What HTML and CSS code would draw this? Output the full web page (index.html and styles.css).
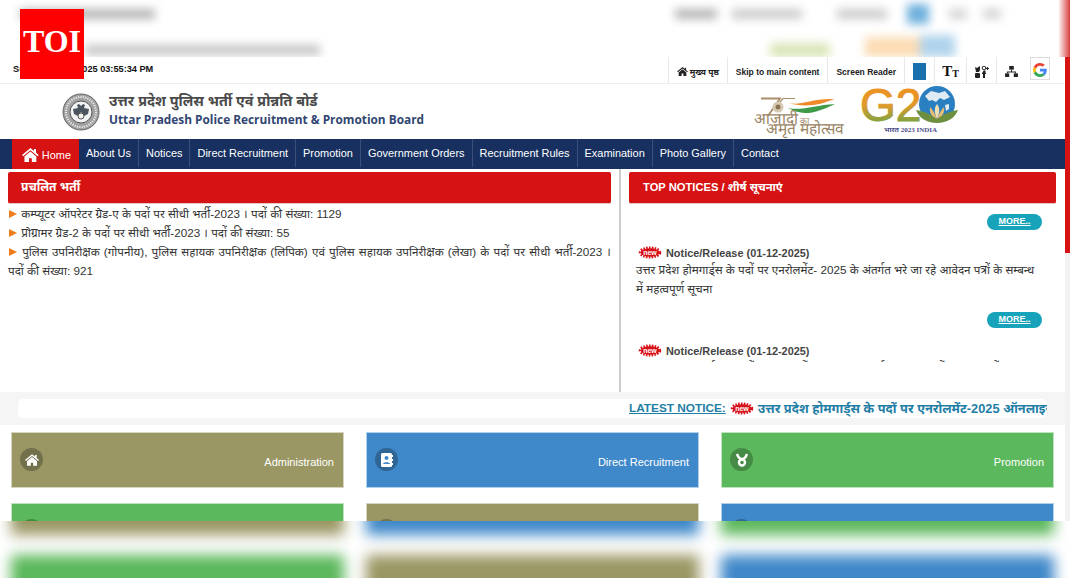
FILE: index.html
```html
<!DOCTYPE html>
<html lang="hi">
<head>
  <meta charset="UTF-8" />
  <title>Uttar Pradesh Police Recruitment &amp; Promotion Board</title>
  <link rel="stylesheet" href="styles.css">
</head>
<body>
  <svg class="defs" width="0" height="0">
    <symbol id="home" viewBox="0 0 24 20">
      <path d="M12 0 0 10l1.600 1.900L12 3.300l10.400 8.600L24 10l-4-3.300V1.500h-3v2.700zM12 5 3.500 12v8H10v-5.500h4V20h6.500v-8z"/>
    </symbol>
    <symbol id="new" viewBox="0 0 24 13">
      <ellipse cx="12" cy="6.500" rx="9.500" ry="4.300" fill="#d8121a" stroke="#d8121a" stroke-width="3.500" stroke-dasharray="1.500 1.200"/>
      <text x="12" y="9" text-anchor="middle" class="new-text">new</text>
    </symbol>
  </svg>

  <div class="logo-toi">TOI</div>

  <div class="blur-top">
    <div class="blur-row">
      <span class="smear s1"></span>
      <span class="smear s2"></span>
      <span class="smear s3"></span>
      <span class="smear s4"></span>
      <span class="smear s5 blue"></span>
      <span class="smear s6"></span>
      <span class="smear s7"></span>
    </div>
    <div class="blur-row row-low">
      <span class="smear s8"></span>
      <span class="smear s9 green"></span>
      <span class="smear s10 orange"></span>
      <span class="smear s11 sky"></span>
    </div>
    <div class="blur-red"></div>
  </div>

  <div class="window">
    <div class="page">
      <div class="topbar">
        <div class="clock">Sunday, 07-12-2025 03:55:34 PM</div>
        <ul class="tools">
          <li><svg width="11" height="9" fill="#222"><use href="#home"/></svg> मुख्य पृष्ठ</li>
          <li>Skip to main content</li>
          <li>Screen Reader</li>
          <li class="tool-icon"><span class="swatch"></span></li>
          <li class="tool-icon tool-tt"><span class="big-t">T</span><span class="small-t">T</span></li>
          <li class="tool-icon">
            <svg width="14" height="12" viewBox="0 0 14 12" fill="#222">
              <path d="M0 1l2 1 3-2v4l-1 2H1z"/>
              <circle cx="9" cy="2" r="1.800" fill="none" stroke="#222"/>
              <path d="M12 1h1v1h1v1h-1v1h-1V3h-1V2h1z"/>
              <rect x="0" y="7" width="5" height="5" rx="1"/>
              <path d="M8 12V8H7V6.500h1V5.500C8 4.800 9 4.500 10.500 4.500V6H10v.5h1V8h-1v4z"/>
            </svg>
          </li>
          <li class="tool-icon">
            <svg width="13" height="11" viewBox="0 0 14 12" fill="#222">
              <rect x="4.500" y="0" width="5" height="4"/>
              <rect x="0" y="8" width="4.500" height="4"/>
              <rect x="9.500" y="8" width="4.500" height="4"/>
              <path d="M6.500 4h1v2H12v2h-1V7H3v1H2V6h4.500z"/>
            </svg>
          </li>
          <li class="tool-google">
            <svg width="14" height="14" viewBox="0 0 48 48">
              <path fill="#ea4335" d="M24 9.500c3.500 0 6.700 1.200 9.200 3.600l6.900-6.900C35.900 2.400 30.500 0 24 0 14.600 0 6.500 5.400 2.600 13.200l8 6.200C12.500 13.700 17.800 9.500 24 9.500z"/>
              <path fill="#4285f4" d="M47 24.500c0-1.600-.1-3.100-.4-4.500H24v9h12.900c-.6 3-2.200 5.500-4.800 7.200l7.700 6C44.300 38 47 31.800 47 24.500z"/>
              <path fill="#fbbc05" d="M10.500 28.600c-.5-1.500-.8-3-.8-4.600s.3-3.100.8-4.600l-8-6.200C.9 16.500 0 20.100 0 24s.9 7.500 2.600 10.800z"/>
              <path fill="#34a853" d="M24 48c6.500 0 11.900-2.100 15.900-5.800l-7.700-6c-2.200 1.400-4.900 2.300-8.200 2.300-6.200 0-11.500-4.200-13.400-9.900l-8 6.200C6.500 42.600 14.600 48 24 48z"/>
            </svg>
          </li>
        </ul>
      </div>

      <header class="masthead">
        <div class="brand">
          <svg width="38" height="38" viewBox="0 0 38 38">
            <circle cx="19" cy="19" r="18" fill="#a2a2a2" stroke="#666"/>
            <circle cx="19" cy="19" r="15" fill="none" stroke="#ececec" stroke-width="2" stroke-dasharray="1.200 1.200"/>
            <circle cx="19" cy="19" r="11" fill="#f2f2f2" stroke="#555"/>
            <path d="M19 8v5l-2-2-2 1 1 3-5 1 1 5 4 2 3-4 3 4 4-2 1-5-5-1 1-3-2-1-2 2z" fill="#4b5560"/>
            <circle cx="19" cy="23" r="3" fill="#f2f2f2" stroke="#555"/>
          </svg>
          <div>
            <div class="brand-hi">उत्तर प्रदेश पुलिस भर्ती एवं प्रोन्नति बोर्ड</div>
            <div class="brand-en">Uttar Pradesh Police Recruitment &amp; Promotion Board</div>
          </div>
        </div>
        <div class="badges">
          <div class="azadi">
            <svg width="92" height="19" viewBox="0 0 92 19">
              <path d="M7 1.500H26L14 19" fill="none" stroke="#a98e68" stroke-width="1.800"/>
              <path d="M29 1.500H41M29 1.500l-5 6" fill="none" stroke="#a98e68" stroke-width="1.200"/>
              <circle cx="24" cy="10" r="5.500" fill="#d6c8b2"/>
              <circle cx="24" cy="10" r="2.500" fill="#8a7454"/>
              <path d="M34 6c14 3 22-5 47-4-8 2-12 5-22 6-10 1-17 0-25-2z" fill="#ee8a2a"/>
              <path d="M34 11c14 3 27-3 47-4-7 3-14 7-26 9-10 0-15-2-21-5z" fill="#3f9a4a"/>
            </svg>
            <div class="azadi-hi">आज़ादी<small>का</small></div>
            <div class="azadi-hi2">अमृत महोत्सव</div>
          </div>
          <svg class="g20" width="102" height="52" viewBox="0 0 102 52">
            <defs>
              <linearGradient id="g20fill" x1="0" y1="0" x2="0" y2="1">
                <stop offset="0" stop-color="#f28c1e"/>
                <stop offset=".5" stop-color="#e09a2c"/>
                <stop offset="1" stop-color="#4ea64a"/>
              </linearGradient>
            </defs>
            <text x="1" y="36" class="g20-text" fill="url(#g20fill)" stroke="url(#g20fill)" stroke-width="1">G2</text>
            <circle cx="78" cy="19" r="18" fill="#2a7fc0"/>
            <path d="M66 11l6-5 8 2 6-2 5 6-6 3-4-2-4 4-4-2-3 1zM86 20l4-1 0 5-3 2z" fill="#dfeaf2"/>
            <path d="M78 19c3 4 3 8 0 15-3-7-3-11 0-15z" fill="#f0dfb4"/>
            <path d="M71 22c3 3 5 7 7 12-5-2-8-6-7-12zM85 22c-3 3-5 7-7 12 5-2 8-6 7-12z" fill="#e8bd72"/>
            <path d="M57 25c7 1 15 4 21 9 6-5 14-8 21-9-3 8-11 13-21 13s-18-5-21-13z" fill="#6d8f3f"/>
            <text x="25" y="47" class="g20-sub">भारत 2023 INDIA</text>
          </svg>
        </div>
      </header>

      <nav class="mainnav">
        <a class="nav-home"><svg width="17" height="14" fill="#fff"><use href="#home"/></svg> Home</a>
        <a>About Us</a>
        <a>Notices</a>
        <a>Direct Recruitment</a>
        <a>Promotion</a>
        <a>Government Orders</a>
        <a>Recruitment Rules</a>
        <a>Examination</a>
        <a>Photo Gallery</a>
        <a>Contact</a>
      </nav>

      <div class="panels">
        <section class="panel-left">
          <h2 class="panel-title">प्रचलित भर्ती</h2>
          <ul class="openings">
            <li><span class="arrow"></span> कम्प्यूटर ऑपरेटर ग्रेड-ए के पदों पर सीधी भर्ती-2023 । पदों की संख्या: 1129</li>
            <li><span class="arrow"></span> प्रोग्रामर ग्रेड-2 के पदों पर सीधी भर्ती-2023 । पदों की संख्या: 55</li>
            <li><span class="arrow"></span> पुलिस उपनिरीक्षक (गोपनीय), पुलिस सहायक उपनिरीक्षक (लिपिक) एवं पुलिस सहायक उपनिरीक्षक (लेखा) के पदों पर सीधी भर्ती-2023 । पदों की संख्या: 921</li>
          </ul>
        </section>
        <section class="panel-right">
          <h2 class="panel-title title-notices">TOP NOTICES / शीर्ष सूचनाएं</h2>
          <div class="notices">
            <div class="more-row"><a class="more">MORE..</a></div>
            <div class="notice">
              <div class="notice-head"><svg width="24" height="13"><use href="#new"/></svg> Notice/Release (01-12-2025)</div>
              <p>उत्तर प्रदेश होमगार्ड्स के पदों पर एनरोलमेंट- 2025 के अंतर्गत भरे जा रहे आवेदन पत्रों के सम्बन्ध में महत्वपूर्ण सूचना</p>
            </div>
            <div class="more-row"><a class="more">MORE..</a></div>
            <div class="notice">
              <div class="notice-head"><svg width="24" height="13"><use href="#new"/></svg> Notice/Release (01-12-2025)</div>
              <p>उत्तर प्रदेश होमगार्ड्स के पदों पर एनरोलमेंट- 2025 के अंतर्गत आवेदन पत्रों के सम्बन्ध में सूचना</p>
            </div>
          </div>
        </section>
      </div>

      <div class="ticker">
        <div class="ticker-inner">
          <a class="ticker-label">LATEST NOTICE:</a>
          <svg width="24" height="13"><use href="#new"/></svg>
          <span class="ticker-text">उत्तर प्रदेश होमगार्ड्स के पदों पर एनरोलमेंट-2025 ऑनलाइन आवेदन</span>
        </div>
      </div>

      <div class="cards">
        <a class="card olive">
          <span class="card-icon"><svg width="14" height="12" fill="#fff"><use href="#home"/></svg></span>
          <span class="card-label">Administration</span>
        </a>
        <a class="card blue">
          <span class="card-icon">
            <svg width="12" height="14" viewBox="0 0 12 14">
              <rect x="0" y="0" width="11" height="14" rx="1.500" fill="#fff"/>
              <circle cx="5.500" cy="5" r="2" fill="#3f88c9"/>
              <path d="M2 11c0-2.500 7-2.500 7 0z" fill="#3f88c9"/>
              <path d="M11 2h1v2h-1zM11 6h1v2h-1zM11 10h1v2h-1z" fill="#fff"/>
            </svg>
          </span>
          <span class="card-label">Direct Recruitment</span>
        </a>
        <a class="card green">
          <span class="card-icon">
            <svg width="14" height="14" viewBox="0 0 14 14" fill="none" stroke="#fff" stroke-width="2.400">
              <circle cx="7" cy="9.500" r="3"/>
              <path d="M2 1c1 3 2 5 5 5s4-2 5-5"/>
            </svg>
          </span>
          <span class="card-label">Promotion</span>
        </a>
        <a class="card green"><span class="card-icon"></span></a>
        <a class="card olive"><span class="card-icon"></span></a>
        <a class="card blue"><span class="card-icon"></span></a>
      </div>
    </div>
    <div class="scrollbar"><div class="thumb"></div></div>
  </div>

  <div class="blur-bottom">
    <div class="blur-cards">
      <span class="olive"></span><span class="blue"></span><span class="green"></span>
      <span class="green"></span><span class="olive"></span><span class="blue"></span>
    </div>
  </div>
</body>
</html>
```

FILE: styles.css
```css
html, body { margin: 0; padding: 0; }
body {
  width: 1070px;
  height: 578px;
  overflow: hidden;
  position: relative;
  background: #fff;
  font-family: "Liberation Sans", "Noto Sans", "DejaVu Sans", sans-serif;
  color: #333;
}
ul { list-style: none; margin: 0; padding: 0; }
.defs { position: absolute; }
.new-text { font: bold 7px "Liberation Sans", sans-serif; fill: #fff; }

.logo-toi {
  position: absolute;
  left: 20px; top: 9px;
  width: 64px; height: 70px;
  background: #ff0000;
  color: #fff;
  font: bold 32px/64px "Liberation Serif", serif;
  text-align: center;
  z-index: 5;
}

/* blurred strips above and below the page */
.blur-top {
  height: 57px;
  overflow: hidden;
  position: relative;
  background: #fff;
}
.blur-row {
  display: flex;
  height: 28px;
  align-items: center;
  filter: blur(5px);
}
.row-low { height: 29px; align-items: flex-end; }
.smear { display: block; height: 10px; background: #b5b5b5; flex: none; }
.smear.blue { background: #6fb0dc; height: 20px; }
.smear.green { background: #d9e6b8; height: 14px; }
.smear.orange { background: #fbdcb4; height: 20px; }
.smear.sky { background: #b0d4ec; height: 22px; }
.s1 { width: 135px; margin-left: 20px; }
.s2 { width: 42px; margin-left: 520px; }
.s3 { width: 70px; margin-left: 15px; opacity: .7; }
.s4 { width: 50px; margin-left: 35px; opacity: .7; }
.s5 { width: 22px; margin-left: 20px; }
.s6 { width: 18px; margin-left: 20px; opacity: .6; }
.s7 { width: 18px; margin-left: 16px; opacity: .6; }
.s8 { width: 235px; margin-left: 85px; background: #c4c4c4; margin-bottom: 2px; }
.s9 { width: 60px; margin-left: 450px; }
.s10 { width: 55px; margin-left: 35px; }
.s11 { width: 35px; }
.blur-red {
  position: absolute;
  right: 0; top: 0;
  width: 12px; height: 57px;
  background: linear-gradient(to right, #fff, #d94040);
}

.window { display: flex; height: 464px; overflow: hidden; }
.page { width: 1065px; flex: none; }
.scrollbar { width: 5px; background: #f1f1f1; }
.thumb { height: 196px; background: #d61212; }

/* top strip */
.topbar {
  display: flex;
  justify-content: space-between;
  height: 26px;
  border-bottom: 1px solid #eee;
}
.clock { font-size: 9.200px; font-weight: bold; color: #111; padding: 7px 0 0 13px; }
.tools { display: flex; padding-right: 15px; }
.tools li {
  display: flex;
  align-items: center;
  gap: 2px;
  padding: 3px 8px 0 8px;
  font-size: 8.500px;
  font-weight: bold;
  color: #222;
  border-left: 1px solid #e8e8e8;
}
.tools .tool-icon {
  width: 30px;
  box-sizing: border-box;
  padding: 3px 0 0;
  justify-content: center;
}
.swatch { display: block; width: 13px; height: 17px; background: #1a70ad; }
.tools .tool-tt { gap: 0; width: 32px; font-family: "Liberation Serif", serif; color: #111; }
.big-t { font-size: 15px; }
.small-t { font-size: 10px; padding-top: 3px; }
.tools .tool-google {
  margin-left: 4px;
  width: 20px;
  height: 23px;
  padding: 5px 0 0;
  justify-content: center;
  align-items: flex-start;
  box-sizing: border-box;
  border: 1px solid #ddd;
}

/* header with logos */
.masthead {
  display: flex;
  justify-content: space-between;
  height: 55px;
  padding: 0 104px 0 62px;
  background: #fff;
}
.brand { display: flex; align-items: center; gap: 9px; padding-bottom: 5px; }
.brand-hi { font-size: 14.300px; line-height: 19px; color: #4a4a4a; font-weight: bold; }
.brand-en { font-size: 11.850px; line-height: 16px; font-weight: bold; color: #324672; font-family: "Open Sans", sans-serif; }
.brand svg { margin-top: 5px; }
.badges { display: flex; align-items: flex-start; gap: 13px; }
.azadi { width: 92px; padding-top: 13px; color: #9a8464; font-family: "Liberation Serif", serif; line-height: 11px; white-space: nowrap; }
.azadi svg { display: block; margin-bottom: -3px; }
.azadi-hi { font-size: 15.500px; }
.azadi-hi small { font-size: 9px; margin-left: 2px; }
.azadi-hi2 { font-size: 15.500px; padding-left: 12px; margin-top: -4px; }
.g20 { margin-top: 1px; }
.g20-text { font: 46px "Liberation Sans", sans-serif; }
.g20-sub { font: bold 7px "Liberation Serif", "Noto Sans", serif; fill: #4d4d88; }

/* main menu */
.mainnav {
  display: flex;
  height: 30px;
  padding-left: 12px;
  background: #17305f;
}
.mainnav a {
  display: flex;
  align-items: center;
  padding: 0 7px;
  font-size: 10.950px;
  color: #fff;
  border-right: 1px solid #3b5078;
  margin: 0 0 2px;
}
.mainnav a:last-child { border-right: 0; }
.mainnav .nav-home {
  gap: 3px;
  padding: 2px 8px 0 10px;
  background: #d61212;
  border-right: 0;
  margin: 0;
  width: 49px;
}

/* the two columns */
.panels { display: flex; height: 223px; }
.panel-left { width: 621px; box-sizing: border-box; padding: 3px 8px 0 8px; border-right: 2px solid #ccc; }
.panel-right { flex: 1; padding: 3px 9px 0 8px; }
.panel-title {
  margin: 0;
  height: 31px;
  padding-left: 13px;
  background: #d61212;
  border-bottom: 1px solid #e2c8c8;
  border-radius: 2px;
  color: #fff;
  font-size: 12px;
  font-weight: bold;
  line-height: 30px;
}
.title-notices { font-size: 11.200px; padding-left: 14px; }
.openings { font-size: 11.700px; line-height: 19px; color: #333; text-align: justify; }
.arrow {
  display: inline-block;
  margin: 0 1px 0 1px;
  border-left: 8px solid #ee7c1a;
  border-top: 4px solid transparent;
  border-bottom: 4px solid transparent;
}

.notices { height: 158px; overflow: hidden; padding: 0 14px 0 7px; }
.more-row { display: flex; justify-content: flex-end; padding-top: 10px; }
.more {
  display: block;
  width: 55px;
  height: 16px;
  border-radius: 8px;
  background: #17a3b9;
  color: #fff;
  font-size: 9px;
  font-weight: bold;
  line-height: 15px;
  text-align: center;
  text-decoration: underline;
}
.notice { margin-top: 15px; height: 57px; color: #333; }
.notice-head {
  display: flex;
  align-items: center;
  gap: 4px;
  height: 15px;
  padding-left: 2px;
  font-size: 10.900px;
  font-weight: bold;
  color: #444;
}
.notice p { margin: 0; font-size: 11.700px; line-height: 19px; color: #333; }

/* scrolling notice strip */
.ticker { height: 33px; box-sizing: border-box; padding: 7px 18px 0 18px; background: #f5f5f5; }
.ticker-inner {
  display: flex;
  align-items: center;
  gap: 4px;
  height: 19px;
  padding: 0 0 1px 611px;
  box-sizing: border-box;
  overflow: hidden;
  white-space: nowrap;
  background: #fff;
  border-radius: 5px;
  font-size: 11.800px;
  font-weight: bold;
  color: #1f7ea5;
}
.ticker-label { text-decoration: underline; }
.ticker-inner svg { flex: none; }
.ticker-text { font-size: 12.800px; }

/* coloured link cards */
.cards {
  display: grid;
  grid-template-columns: repeat(3, 333px);
  column-gap: 22px;
  row-gap: 15px;
  padding: 7px 11px;
}
.olive { background: #9a9764; }
.blue { background: #3f88c9; }
.green { background: #5cb85c; }
.card {
  display: flex;
  justify-content: space-between;
  height: 56px;
  box-sizing: border-box;
  padding: 15px 9px 0 8px;
  border: 1px solid rgba(255, 255, 255, .6);
  color: #fff;
  font-size: 11px;
}
.card-icon {
  display: flex;
  align-items: center;
  justify-content: center;
  width: 23px;
  height: 23px;
  border-radius: 50%;
  background: rgba(0, 0, 0, .25);
}
.card-label { padding-top: 8px; }

.blur-bottom { height: 57px; overflow: hidden; background: #fff; }
.blur-cards {
  display: grid;
  grid-template-columns: repeat(3, 333px);
  gap: 20px 22px;
  padding: 0 11px;
  margin-top: -42px;
  filter: blur(7px);
}
.blur-cards span { display: block; height: 56px; }
```
